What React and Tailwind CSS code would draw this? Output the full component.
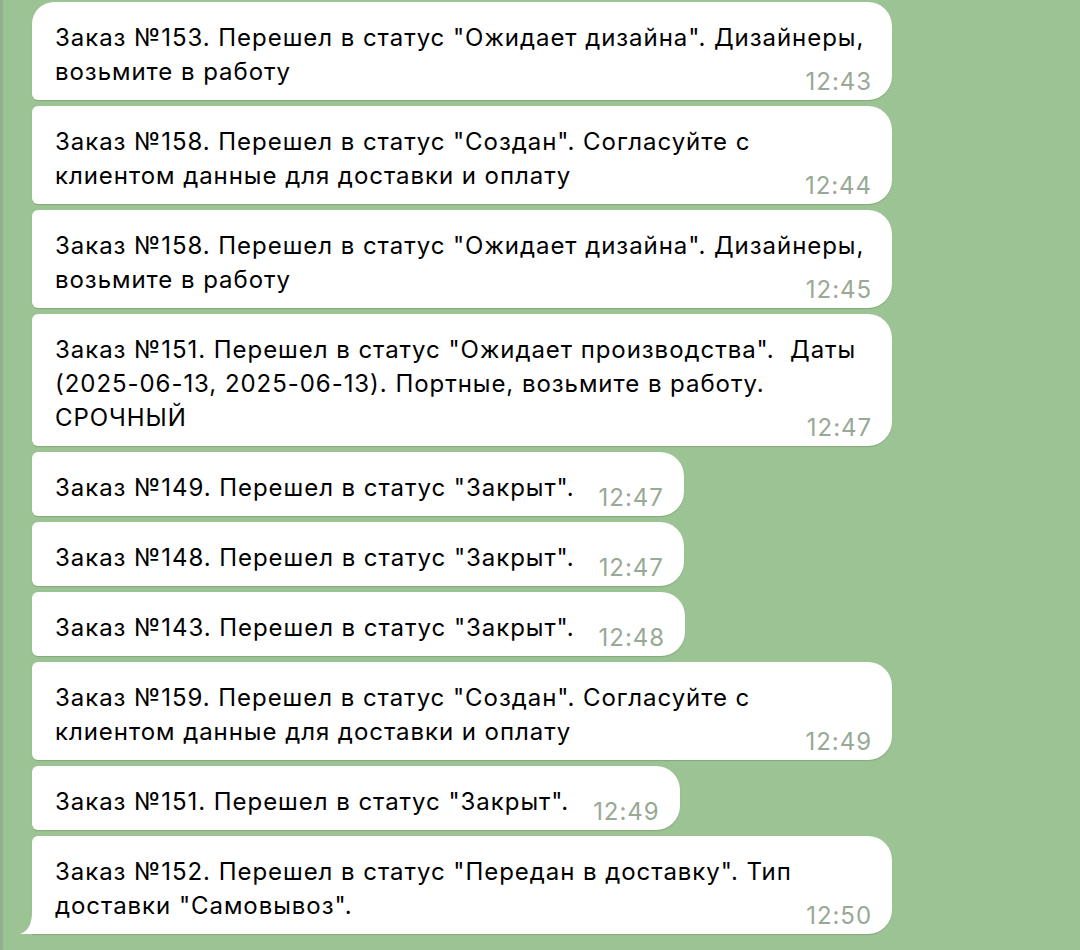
import React from 'react';
import clsx from 'clsx';

const messages = [
  { lines: ['Заказ №153. Перешел в статус "Ожидает дизайна". Дизайнеры,', 'возьмите в работу'], time: '12:43' },
  { lines: ['Заказ №158. Перешел в статус "Создан". Согласуйте с', 'клиентом данные для доставки и оплату'], time: '12:44' },
  { lines: ['Заказ №158. Перешел в статус "Ожидает дизайна". Дизайнеры,', 'возьмите в работу'], time: '12:45' },
  {
    lines: [
      'Заказ №151. Перешел в статус "Ожидает производства".  Даты',
      '(2025-06-13, 2025-06-13). Портные, возьмите в работу.',
      'СРОЧНЫЙ',
    ],
    time: '12:47',
  },
  { lines: ['Заказ №149. Перешел в статус "Закрыт".'], time: '12:47' },
  { lines: ['Заказ №148. Перешел в статус "Закрыт".'], time: '12:47' },
  { lines: ['Заказ №143. Перешел в статус "Закрыт".'], time: '12:48' },
  { lines: ['Заказ №159. Перешел в статус "Создан". Согласуйте с', 'клиентом данные для доставки и оплату'], time: '12:49' },
  { lines: ['Заказ №151. Перешел в статус "Закрыт".'], time: '12:49' },
  { lines: ['Заказ №152. Перешел в статус "Передан в доставку". Тип', 'доставки "Самовывоз".'], time: '12:50' },
];

// bubble tail for the last message in a group
const Tail = () => (
  <svg className="absolute bottom-0 left-[-12px]" width="12" height="22" viewBox="0 0 12 22">
    <path d="M12 0 C12 12 8 19 0 22 L12 22 Z" fill="#ffffff" />
  </svg>
);

const Bubble = ({ lines, time, first, last }) => {
  const wide = lines.length > 1;
  const head = lines.slice(0, -1);
  const tail = lines[lines.length - 1];

  return (
    <div
      className={clsx(
        'relative bg-white pl-[23px] pr-[20px] pt-[19px] pb-[6px] rounded-r-[24px] shadow-[0_1px_1px_rgba(60,90,50,0.25)]',
        wide ? 'w-[860px]' : 'w-fit',
        first ? 'rounded-tl-[22px]' : 'rounded-tl-[6px]',
        last ? 'rounded-bl-none' : 'rounded-bl-[6px]'
      )}
    >
      {head.map((line, i) => (
        <div key={i} className="whitespace-pre">{line}</div>
      ))}
      <div className="flex items-start justify-between">
        <span className="whitespace-pre">{tail}</span>
        <span className="ml-[24px] mt-[15px] leading-[24px] text-[#98a995]">{time}</span>
      </div>
      {last && <Tail />}
    </div>
  );
};

export default function App() {
  return (
    <div className="flex h-[950px] w-[1080px] overflow-hidden bg-[#9cc393] font-['Inter',sans-serif] text-[24px] leading-[34px] tracking-[0.95px] text-black">
      <div className="w-[3px] shrink-0 bg-[#93b08d]" />
      <div className="flex flex-col items-start gap-[6px] pl-[29px] pt-[2px]">
        {messages.map((m, i) => (
          <Bubble key={i} {...m} first={i === 0} last={i === messages.length - 1} />
        ))}
      </div>
    </div>
  );
}
